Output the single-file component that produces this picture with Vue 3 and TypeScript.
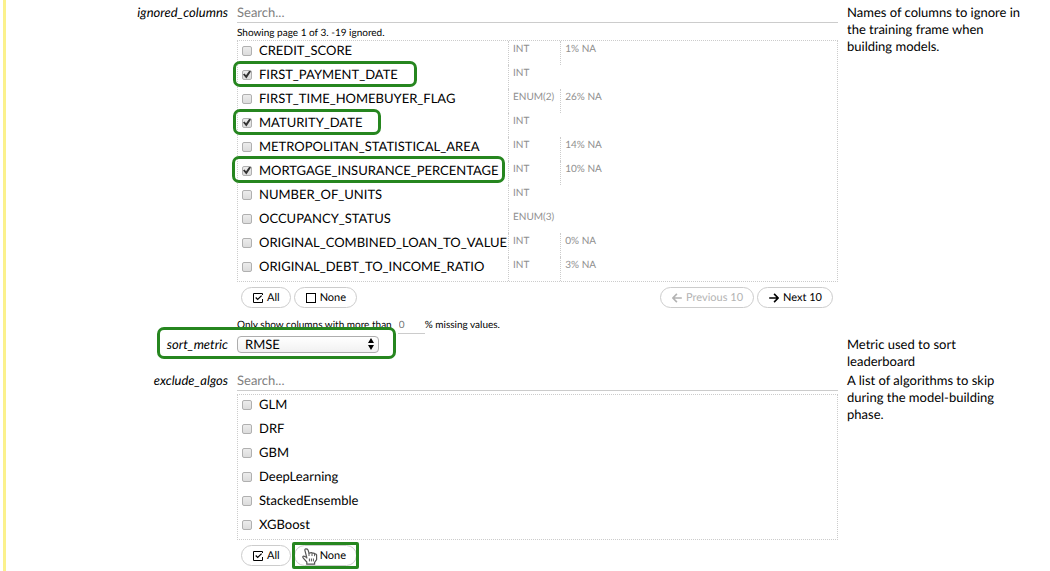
<script setup lang="ts">
import { reactive, ref } from 'vue'

interface Column {
  name: string
  type: string
  missing?: string
  ignored: boolean
  mark?: string
}

interface Algo {
  name: string
  excluded: boolean
}

const columns = reactive<Column[]>([
  { name: 'CREDIT_SCORE', type: 'INT', missing: '1% NA', ignored: false },
  { name: 'FIRST_PAYMENT_DATE', type: 'INT', ignored: true, mark: 'mark-wide' },
  { name: 'FIRST_TIME_HOMEBUYER_FLAG', type: 'ENUM(2)', missing: '26% NA', ignored: false },
  { name: 'MATURITY_DATE', type: 'INT', ignored: true, mark: 'mark-wide' },
  { name: 'METROPOLITAN_STATISTICAL_AREA', type: 'INT', missing: '14% NA', ignored: false },
  { name: 'MORTGAGE_INSURANCE_PERCENTAGE', type: 'INT', missing: '10% NA', ignored: true, mark: 'mark-tight' },
  { name: 'NUMBER_OF_UNITS', type: 'INT', ignored: false },
  { name: 'OCCUPANCY_STATUS', type: 'ENUM(3)', ignored: false },
  { name: 'ORIGINAL_COMBINED_LOAN_TO_VALUE', type: 'INT', missing: '0% NA', ignored: false },
  { name: 'ORIGINAL_DEBT_TO_INCOME_RATIO', type: 'INT', missing: '3% NA', ignored: false },
])

const algos = reactive<Algo[]>(
  ['GLM', 'DRF', 'GBM', 'DeepLearning', 'StackedEnsemble', 'XGBoost'].map((name) => ({ name, excluded: false })),
)

const metrics = ['RMSE', 'AUTO', 'MSE', 'MAE', 'RMSLE', 'AUC', 'logloss']
const metric = ref('RMSE')
const columnSearch = ref('')
const algoSearch = ref('')
const missingPercent = ref('0')

function setIgnored(value: boolean) {
  columns.forEach((c) => (c.ignored = value))
}

function setExcluded(value: boolean) {
  algos.forEach((a) => (a.excluded = value))
}
</script>

<template>
  <main class="cell">
    <form class="form" @submit.prevent>
      <label class="param" for="ignored-columns">ignored_columns</label>
      <div class="control">
        <input id="ignored-columns" v-model="columnSearch" class="search" type="text" placeholder="Search..." />
        <p class="status">Showing page 1 of 3. -19 ignored.</p>
        <div class="list">
          <table>
            <tbody>
              <tr v-for="(column, i) in columns" :key="column.name">
                <td class="name">
                  <label class="option" :for="'column-' + i">
                    <input :id="'column-' + i" v-model="column.ignored" class="tick" type="checkbox" />
                    {{ column.name }}
                    <span v-if="column.mark" class="mark" :class="column.mark"></span>
                  </label>
                </td>
                <td class="meta">{{ column.type }}</td>
                <td :class="{ meta: column.missing }">{{ column.missing }}</td>
              </tr>
            </tbody>
          </table>
        </div>
        <div class="actions">
          <button class="pill" type="button" @click="setIgnored(true)">
            <svg class="icon" viewBox="0 0 10 10" aria-hidden="true">
              <path d="M9.5 6V9.5H.5V.5H9.5V2" />
              <path d="M2.7 4.5L4.7 6.5L8.6 2.6" class="check" />
            </svg>
            All
          </button>
          <button class="pill" type="button" @click="setIgnored(false)">
            <svg class="icon" viewBox="0 0 10 10" aria-hidden="true">
              <rect x=".5" y=".5" width="9" height="9" />
            </svg>
            None
          </button>
          <button class="pill push" type="button" disabled>
            <svg class="icon" viewBox="0 0 10 10" aria-hidden="true">
              <path d="M9.8 5H1M4.9 .9L.9 5L4.9 9.1" class="thick" />
            </svg>
            Previous 10
          </button>
          <button class="pill" type="button">
            <svg class="icon" viewBox="0 0 10 10" aria-hidden="true">
              <path d="M.2 5H9M5.1 .9L9.1 5L5.1 9.1" class="thick" />
            </svg>
            Next 10
          </button>
        </div>
        <div class="filter">
          <label for="missing">Only show columns with more than</label>
          <input id="missing" v-model="missingPercent" class="percent" type="text" />
          <span>% missing values.</span>
        </div>
      </div>
      <p class="help">Names of columns to ignore in the training frame when building models.</p>

      <label class="param" for="sort-metric">sort_metric</label>
      <div class="control">
        <div class="picker">
          <select id="sort-metric" v-model="metric">
            <option v-for="m in metrics" :key="m">{{ m }}</option>
          </select>
          <svg class="arrows" viewBox="0 0 6 12" aria-hidden="true">
            <path d="M3 0L6 5H0ZM3 12L0 7H6Z" />
          </svg>
          <span class="mark mark-field"></span>
        </div>
      </div>
      <p class="help">Metric used to sort leaderboard</p>

      <label class="param" for="exclude-algos">exclude_algos</label>
      <div class="control">
        <input id="exclude-algos" v-model="algoSearch" class="search spaced" type="text" placeholder="Search..." />
        <div class="list">
          <table>
            <tbody>
              <tr v-for="(algo, i) in algos" :key="algo.name">
                <td class="name">
                  <label class="option" :for="'algo-' + i">
                    <input :id="'algo-' + i" v-model="algo.excluded" class="tick" type="checkbox" />
                    {{ algo.name }}
                  </label>
                </td>
              </tr>
            </tbody>
          </table>
        </div>
        <div class="actions">
          <button class="pill" type="button" @click="setExcluded(true)">
            <svg class="icon" viewBox="0 0 10 10" aria-hidden="true">
              <path d="M9.5 6V9.5H.5V.5H9.5V2" />
              <path d="M2.7 4.5L4.7 6.5L8.6 2.6" class="check" />
            </svg>
            All
          </button>
          <button class="pill" type="button" @click="setExcluded(false)">
            <svg class="icon" viewBox="0 0 10 10" aria-hidden="true"></svg>
            None
            <span class="mark mark-button"></span>
            <svg class="pointer" viewBox="0 0 16 17" aria-hidden="true">
              <path
                d="M4.8 10.6V9.6L2.8 8.4Q1.5 7.6 .9 8.6Q.6 9.3 1.3 10.1L4.8 14V16.2H12.6V14.4L14.6 11.6V6.9Q14.4 5.6 12.7 5.8Q12.3 4.9 10.6 5.2Q9.8 4.4 8.2 4.9L7 5L6 1.9Q5.4 .7 3.8 .8Q2.7 .9 2.9 2.3L4.8 9.6"
              />
              <path d="M7 5V8M10 5.2V8M12.6 5.8V8.2M7.4 10.5V13.4M9.4 10.5V13.4M11.4 10.5V13.4" class="fine" />
            </svg>
          </button>
        </div>
      </div>
      <p class="help">A list of algorithms to skip during the model-building phase.</p>
    </form>
  </main>
</template>

<style>
body {
  margin: 0;
  background: #fff;
}
</style>

<style scoped>
.cell {
  box-sizing: border-box;
  min-height: 100vh;
  margin-left: 3px;
  padding-top: 4px;
  border-left: 3px solid #fbf18c;
  color: #000;
  font: 13px/17px Lato, "Liberation Sans", sans-serif;
  text-rendering: geometricPrecision;
}

.form {
  display: grid;
  grid-template-columns: 222px minmax(0, 1fr) 176px;
  column-gap: 9px;
  row-gap: 2px;
  padding-right: 27px;
}

.param {
  text-align: right;
  font-style: italic;
}

.help,
.status {
  margin: 0;
}

input,
select,
button {
  box-sizing: border-box;
  margin: 0;
  color: inherit;
  font: inherit;
  text-rendering: inherit;
}

.search {
  display: block;
  width: 100%;
  height: 19px;
  padding: 0 0 2px;
  border: 0;
  border-bottom: 1px solid #ccc;
  background: none;
  outline: none;
}

.search::placeholder {
  color: #808080;
  opacity: 1;
}

.spaced {
  margin-bottom: 3px;
}

.status,
.filter {
  font-size: 10px;
}

.status {
  padding-top: 3px;
  line-height: 14px;
}

.list {
  border: 1px dotted #ccc;
}

table {
  border-spacing: 0;
}

td {
  box-sizing: border-box;
  height: 24px;
  padding: 0 6px 0 4px;
  vertical-align: top;
  white-space: nowrap;
}

.name {
  padding: 1px 1px 0 4px;
}

.option {
  position: relative;
  display: inline-flex;
  align-items: center;
  gap: 7px;
  vertical-align: top;
}

.tick {
  appearance: none;
  display: grid;
  place-items: center;
  width: 10px;
  height: 10px;
  border: 1px solid #b0b0b0;
  border-radius: 2px;
  background: linear-gradient(#ececec, #dcdcdc);
}

.tick:checked::before {
  content: "";
  width: 8px;
  height: 8px;
  background: #333;
  clip-path: polygon(0 50%, 18% 38%, 38% 60%, 80% 0, 100% 12%, 42% 100%);
}

.meta {
  border-left: 1px dotted #ccc;
  color: #909090;
  font-size: 10px;
}

.actions {
  display: flex;
  gap: 3px;
  margin-top: 5px;
  padding: 0 5px 0 4px;
}

.pill {
  position: relative;
  display: flex;
  align-items: center;
  gap: 4px;
  height: 21px;
  padding: 0 10px 0 11px;
  border: 1px solid #ccc;
  border-radius: 11px;
  background: #fff;
  font-size: 11px;
}

.pill:disabled {
  color: #b3b3b3;
}

.push {
  margin-left: auto;
}

.icon {
  width: 10px;
  height: 10px;
  fill: none;
  stroke: currentColor;
  stroke-width: 1;
}

.check {
  stroke-width: 1.2;
}

.thick {
  stroke-width: 1.6;
}

.filter {
  display: flex;
  margin-top: 9px;
}

.percent {
  width: 27px;
  height: 17px;
  margin-left: 6px;
  padding: 0 1px;
  border: 0;
  border-bottom: 1px solid #ccc;
  background: none;
  color: #777;
}

.picker {
  position: relative;
  width: 142px;
}

select {
  appearance: none;
  display: block;
  width: 100%;
  height: 17px;
  padding: 0 7px;
  border: 1px solid #adadad;
  border-radius: 4px;
  background: linear-gradient(#fff, #f1f1f1);
  line-height: 15px;
}

.arrows {
  position: absolute;
  top: 2px;
  right: 5px;
  width: 6px;
  height: 12px;
  pointer-events: none;
}

.mark {
  position: absolute;
  border: 3px solid #26861f;
  border-radius: 7px;
  pointer-events: none;
}

.mark-wide {
  inset: -5px -19px -4px -9px;
}

.mark-tight {
  inset: -6px -6px -4px -10px;
}

.mark-field {
  inset: -9px -17px -6px -80px;
}

.mark-button {
  inset: -4px -3px;
  border-radius: 2px;
}

.pointer {
  position: absolute;
  top: 2px;
  left: 7px;
  width: 16px;
  height: 17px;
  fill: #fff;
  stroke: #555;
  stroke-width: 1.2;
}

.fine {
  fill: none;
  stroke-width: 1;
}
</style>
